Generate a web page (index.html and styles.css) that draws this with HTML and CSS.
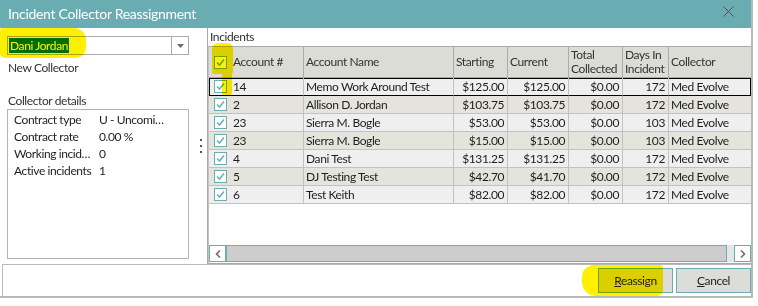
FILE: index.html
```html
<html>
<head>
    <title>Incident Collector Reassignment</title>
    <link rel="stylesheet" href="styles.css">
</head>

<body>
    <div class="window">
        <div class="titlebar">
            <span class="title">Incident Collector Reassignment</span>
            <svg class="close" width="11" height="11" viewBox="0 0 11 11">
                <path d="M0.5 0.5 L10.5 10.5 M10.5 0.5 L0.5 10.5" stroke="#505050" stroke-width="1" fill="none"/>
            </svg>
        </div>

        <div class="main">
            <div class="left">
                <div class="combo">
                    <span class="combo-text"><span class="sel">Dani Jordan</span></span>
                    <span class="combo-btn">
                        <svg width="7" height="4" viewBox="0 0 7 4"><path d="M0 0 H7 L3.5 4 Z" fill="#6a6a6a"/></svg>
                    </span>
                </div>
                <div class="label">New Collector</div>
                <div class="label details-label">Collector details</div>
                <div class="details">
                    <div class="drow"><span class="dk">Contract type</span><span class="dv">U - Uncomi…</span></div>
                    <div class="drow"><span class="dk">Contract rate</span><span class="dv">0.00 %</span></div>
                    <div class="drow"><span class="dk">Working incid…</span><span class="dv">0</span></div>
                    <div class="drow"><span class="dk">Active incidents</span><span class="dv">1</span></div>
                </div>
            </div>

            <div class="splitter"><i></i><i></i><i></i></div>

            <div class="right">
                <div class="incidents-label">Incidents</div>
                <div class="grid">
                    <table>
                        <colgroup>
                            <col style="width:95px"><col style="width:150px"><col style="width:54px">
                            <col style="width:61px"><col style="width:54px"><col style="width:46px"><col style="width:82px">
                        </colgroup>
                        <thead>
                            <tr>
                                <th><div class="chk"><span class="cb"><svg width="11" height="11" viewBox="0 0 11 11"><path d="M2 5.5 L4.5 8 L9 2.5" stroke="#6db2bb" stroke-width="1.6" fill="none"/></svg></span>Account #</div></th>
                                <th>Account Name</th>
                                <th>Starting</th>
                                <th>Current</th>
                                <th>Total<br>Collected</th>
                                <th>Days In<br>Incident</th>
                                <th>Collector</th>
                            </tr>
                        </thead>
                        <tbody>
                            <tr class="selected">
                                <td><div class="chk"><span class="cb"><svg width="11" height="11" viewBox="0 0 11 11"><path d="M2 5.5 L4.5 8 L9 2.5" stroke="#6db2bb" stroke-width="1.6" fill="none"/></svg></span>14</div></td>
                                <td>Memo Work Around Test</td>
                                <td class="num">$125.00</td>
                                <td class="num">$125.00</td>
                                <td class="num">$0.00</td>
                                <td class="num">172</td>
                                <td>Med Evolve</td>
                            </tr>
                            <tr class="alt">
                                <td><div class="chk"><span class="cb"><svg width="11" height="11" viewBox="0 0 11 11"><path d="M2 5.5 L4.5 8 L9 2.5" stroke="#6db2bb" stroke-width="1.6" fill="none"/></svg></span>2</div></td>
                                <td>Allison D. Jordan</td>
                                <td class="num">$103.75</td>
                                <td class="num">$103.75</td>
                                <td class="num">$0.00</td>
                                <td class="num">172</td>
                                <td>Med Evolve</td>
                            </tr>
                            <tr>
                                <td><div class="chk"><span class="cb"><svg width="11" height="11" viewBox="0 0 11 11"><path d="M2 5.5 L4.5 8 L9 2.5" stroke="#6db2bb" stroke-width="1.6" fill="none"/></svg></span>23</div></td>
                                <td>Sierra M. Bogle</td>
                                <td class="num">$53.00</td>
                                <td class="num">$53.00</td>
                                <td class="num">$0.00</td>
                                <td class="num">103</td>
                                <td>Med Evolve</td>
                            </tr>
                            <tr class="alt">
                                <td><div class="chk"><span class="cb"><svg width="11" height="11" viewBox="0 0 11 11"><path d="M2 5.5 L4.5 8 L9 2.5" stroke="#6db2bb" stroke-width="1.6" fill="none"/></svg></span>23</div></td>
                                <td>Sierra M. Bogle</td>
                                <td class="num">$15.00</td>
                                <td class="num">$15.00</td>
                                <td class="num">$0.00</td>
                                <td class="num">103</td>
                                <td>Med Evolve</td>
                            </tr>
                            <tr>
                                <td><div class="chk"><span class="cb"><svg width="11" height="11" viewBox="0 0 11 11"><path d="M2 5.5 L4.5 8 L9 2.5" stroke="#6db2bb" stroke-width="1.6" fill="none"/></svg></span>4</div></td>
                                <td>Dani Test</td>
                                <td class="num">$131.25</td>
                                <td class="num">$131.25</td>
                                <td class="num">$0.00</td>
                                <td class="num">172</td>
                                <td>Med Evolve</td>
                            </tr>
                            <tr class="alt">
                                <td><div class="chk"><span class="cb"><svg width="11" height="11" viewBox="0 0 11 11"><path d="M2 5.5 L4.5 8 L9 2.5" stroke="#6db2bb" stroke-width="1.6" fill="none"/></svg></span>5</div></td>
                                <td>DJ Testing Test</td>
                                <td class="num">$42.70</td>
                                <td class="num">$41.70</td>
                                <td class="num">$0.00</td>
                                <td class="num">172</td>
                                <td>Med Evolve</td>
                            </tr>
                            <tr>
                                <td><div class="chk"><span class="cb"><svg width="11" height="11" viewBox="0 0 11 11"><path d="M2 5.5 L4.5 8 L9 2.5" stroke="#6db2bb" stroke-width="1.6" fill="none"/></svg></span>6</div></td>
                                <td>Test Keith</td>
                                <td class="num">$82.00</td>
                                <td class="num">$82.00</td>
                                <td class="num">$0.00</td>
                                <td class="num">172</td>
                                <td>Med Evolve</td>
                            </tr>
                        </tbody>
                    </table>
                    <div class="grid-empty"></div>
                    <div class="hscroll">
                        <span class="sbtn"><svg width="6" height="8" viewBox="0 0 6 8"><path d="M5 0.5 L1.5 4 L5 7.5" stroke="#707070" stroke-width="1.6" fill="none"/></svg></span>
                        <span class="track"></span>
                        <span class="sbtn"><svg width="6" height="8" viewBox="0 0 6 8"><path d="M1 0.5 L4.5 4 L1 7.5" stroke="#707070" stroke-width="1.6" fill="none"/></svg></span>
                    </div>
                </div>
            </div>
        </div>

        <div class="footer">
            <button class="btn"><u>R</u>eassign</button>
            <button class="btn"><u>C</u>ancel</button>
        </div>

        <!-- highlighter marks drawn over the screenshot -->
        <div class="marker m-combo"></div>
        <div class="marker m-check"></div>
        <div class="marker m-check-tail"></div>
        <div class="marker m-reassign"></div>
    </div>
</body>

</html>
```

FILE: styles.css
```css
body {
    margin: 0;
    background-color: #FFFFFF;
    font: 12px Lato, "Liberation Sans", sans-serif;
    letter-spacing: -0.4px;
    color: #1E1E1E;
}

.window {
    position: relative;
    width: 751px;
    height: 296px;
    border-right: 2px solid #B9B9B9;
    border-bottom: 2px solid #B9B9B9;
    display: flex;
    flex-direction: column;
}

.titlebar {
    height: 28px;
    flex: none;
    background-color: #69ADB2;
    display: flex;
    align-items: center;
    padding: 0 17px 0 8px;
}

.title {
    flex: 1;
    color: #FFFFFF;
    font-size: 14px;
    letter-spacing: -0.3px;
    margin-top: -2px;
}

.close {
    margin-top: -5px;
}

.main {
    height: 236px;
    flex: none;
    display: flex;
}

/* left side */
.left {
    width: 195px;
    flex: none;
}

.combo {
    margin: 8px 0 0 7px;
    width: 180px;
    height: 17px;
    border: 1px solid #ABABAB;
    display: flex;
}

.combo-text {
    flex: 1;
    padding: 2px 0 0 1px;
    line-height: 13px;
}

.sel {
    background-color: #0078D7;
    color: #FFFFFF;
    padding: 0 1px;
}

.combo-btn {
    width: 16px;
    border-left: 1px solid #ABABAB;
    display: flex;
    align-items: center;
    justify-content: center;
}

.label {
    margin: 4px 0 0 8px;
    height: 17px;
    line-height: 17px;
    color: #333333;
}

.details-label {
    margin-top: 17px;
    height: 16px;
    line-height: 16px;
}

.details {
    margin-left: 7px;
    width: 180px;
    height: 147px;
    border: 1px solid #B4B4B4;
    padding-top: 1px;
    box-sizing: content-box;
}

.drow {
    display: flex;
    height: 17px;
    line-height: 17px;
    padding-left: 6px;
    white-space: nowrap;
}

.dk {
    width: 85px;
    overflow: hidden;
}

.splitter {
    width: 12px;
    flex: none;
    display: flex;
    flex-direction: column;
    align-items: center;
    justify-content: center;
    gap: 4px;
    padding-right: 1px;
    box-sizing: border-box;
}

.splitter i {
    width: 2px;
    height: 2px;
    background-color: #555555;
}

/* right side */
.right {
    width: 544px;
    flex: none;
    border-left: 1px solid #A9A9A9;
    box-sizing: border-box;
    display: flex;
    flex-direction: column;
}

.incidents-label {
    height: 18px;
    line-height: 17px;
    padding-left: 2px;
    color: #333333;
}

.grid {
    flex: 1;
    border-top: 1px solid #A9A9A9;
    border-left: 1px solid #C4C4C4;
    border-bottom: 1px solid #A9A9A9;
    display: flex;
    flex-direction: column;
}

table {
    width: 542px;
    table-layout: fixed;
    border-collapse: separate;
    border-spacing: 0;
    font: inherit;
    letter-spacing: inherit;
    color: inherit;
}

th {
    height: 31px;
    padding: 0 2px;
    background-color: #DCDCD7;
    border-right: 1px solid #ABABAB;
    border-bottom: 1px solid #ABABAB;
    text-align: left;
    font-weight: normal;
    line-height: 14px;
    color: #333333;
    white-space: nowrap;
}

td {
    height: 17px;
    padding: 0 2px;
    line-height: 17px;
    background-color: #EFEFEF;
    border-right: 1px solid #C2C2C2;
    border-bottom: 1px solid #C2C2C2;
    white-space: nowrap;
    overflow: hidden;
}

th:last-child,
td:last-child {
    border-right: none;
}

tr.alt td {
    background-color: #E4E4DC;
}

td.num {
    text-align: right;
    padding-right: 3px;
}

tr.selected td {
    border-bottom-color: #000000;
    box-shadow: inset 0 1px #000000;
}

tr.selected td:first-child {
    box-shadow: inset 0 1px #000000, inset 1px 0 #000000;
}

tr.selected td:last-child {
    box-shadow: inset 0 1px #000000, inset -1px 0 #000000;
}

.chk {
    display: flex;
    align-items: center;
    padding-left: 3px;
}

.cb {
    width: 11px;
    height: 11px;
    border: 1px solid #6AAEB3;
    background-color: #FFFFFF;
    margin-right: 6px;
    display: flex;
}

.grid-empty {
    flex: 1;
    background-color: #FFFFFF;
}

.hscroll {
    height: 17px;
    margin-bottom: 1px;
    display: flex;
}

.sbtn {
    width: 15px;
    border: 1px solid #6AAEB3;
    background-color: #FFFFFF;
    display: flex;
    align-items: center;
    justify-content: center;
}

.track {
    flex: 1;
    background-color: #CDCDCD;
    border: 1px solid #6AAEB3;
    margin-right: 7px;
    box-shadow: 8px 0 0 #E6E6E6;
}

/* bottom bar */
.footer {
    flex: 1;
    margin-left: 2px;
    border-top: 1px solid #B9B9B9;
    border-left: 1px solid #B9B9B9;
    display: flex;
    justify-content: flex-end;
    align-items: flex-start;
    gap: 3px;
    padding-top: 3px;
}

.btn {
    width: 75px;
    height: 25px;
    border: 1px solid #6AAEB3;
    background-color: #DCDCD8;
    font: 12px Lato, "Liberation Sans", sans-serif;
    letter-spacing: -0.4px;
    color: #1E1E1E;
    padding: 0;
}

/* yellow highlighter */
.marker {
    position: absolute;
    background-color: #FFF000;
    mix-blend-mode: multiply;
}

.m-combo {
    left: 0;
    top: 28px;
    width: 86px;
    height: 30px;
    border-radius: 3px 12px 10px 5px;
}

.m-check {
    left: 212px;
    top: 43px;
    width: 21px;
    height: 31px;
    border-radius: 6px 6px 2px 2px;
}

.m-check-tail {
    left: 222px;
    top: 74px;
    width: 10px;
    height: 22px;
    border-radius: 0 0 4px 4px;
}

.m-reassign {
    left: 582px;
    top: 265px;
    width: 81px;
    height: 31px;
    border-radius: 12px 3px 6px 14px;
}
```
